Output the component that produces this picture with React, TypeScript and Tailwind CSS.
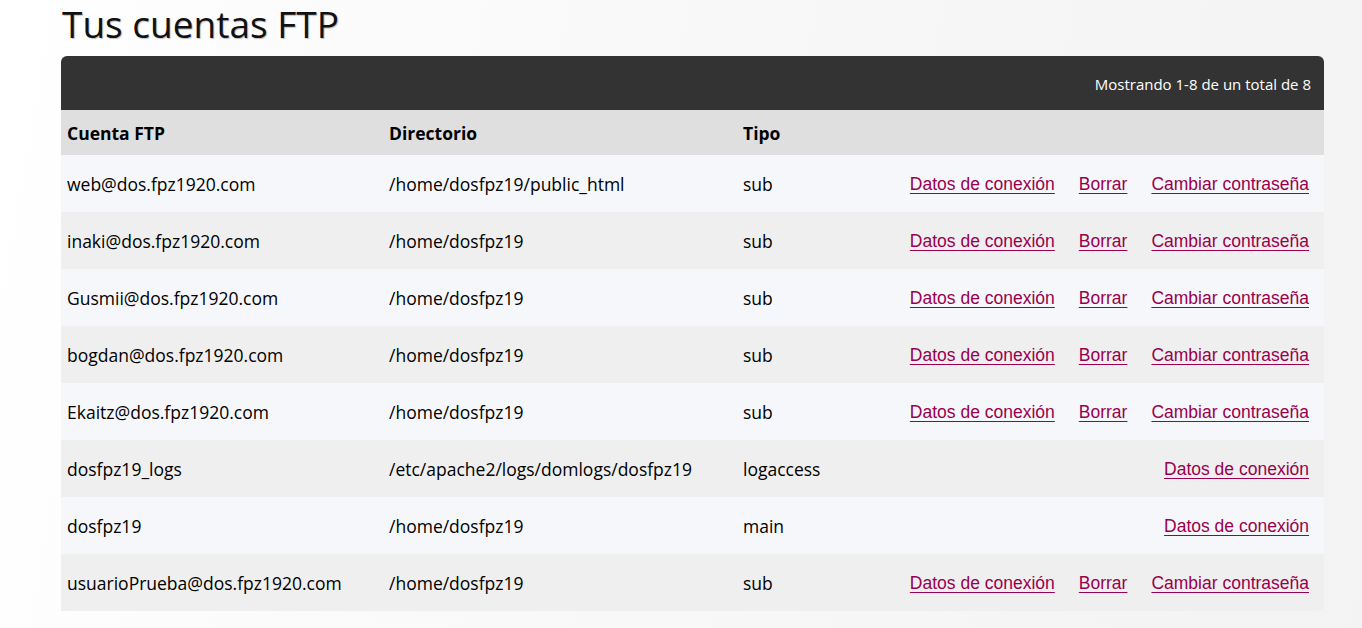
import React from "react";

type Row = { user: string; dir: string; type: string; full: boolean };

const rows: Row[] = [
  { user: "web@dos.fpz1920.com", dir: "/home/dosfpz19/public_html", type: "sub", full: true },
  { user: "inaki@dos.fpz1920.com", dir: "/home/dosfpz19", type: "sub", full: true },
  { user: "Gusmii@dos.fpz1920.com", dir: "/home/dosfpz19", type: "sub", full: true },
  { user: "bogdan@dos.fpz1920.com", dir: "/home/dosfpz19", type: "sub", full: true },
  { user: "Ekaitz@dos.fpz1920.com", dir: "/home/dosfpz19", type: "sub", full: true },
  { user: "dosfpz19_logs", dir: "/etc/apache2/logs/domlogs/dosfpz19", type: "logaccess", full: false },
  { user: "dosfpz19", dir: "/home/dosfpz19", type: "main", full: false },
  { user: "usuarioPrueba@dos.fpz1920.com", dir: "/home/dosfpz19", type: "sub", full: true },
];

const linkCls =
  "text-[#99004d] underline underline-offset-[3px] decoration-1 font-['Liberation_Sans',Arial,sans-serif] text-[17.5px] leading-[22px]";

export default function App() {
  return (
    <div className="min-h-[628px] w-full bg-[linear-gradient(100deg,#ffffff_0%,#f9f9f9_40%,#f3f3f3_100%)] font-['Open_Sans',sans-serif] text-black">
      <div className="pl-[61px] pr-[38px]">
        <h1 className="h-[56px] pl-[1px] pt-[1px] text-[37px] leading-[46px] text-[#111] [text-shadow:1px_1px_1px_rgba(0,0,0,0.25)]">
          Tus cuentas FTP
        </h1>
        <div className="w-[1263px]">
          <div className="h-[54px] rounded-t-[6px] bg-[#333333] flex items-center justify-end pr-[13px] pt-[3px] text-white text-[15px]">
            Mostrando 1-8 de un total de 8
          </div>
          <table className="w-full border-collapse">
            <thead>
              <tr className="h-[45px] bg-[#dfdfdf] text-left text-[17.5px] font-bold">
                <th className="w-[322px] pl-[6px] pt-[2px] font-bold">Cuenta FTP</th>
                <th className="w-[354px] pl-[6px] pt-[2px] font-bold">Directorio</th>
                <th className="pl-[6px] pt-[2px] font-bold">Tipo</th>
                <th></th>
              </tr>
            </thead>
            <tbody>
              {rows.map((r, i) => (
                <tr
                  key={i}
                  className={`h-[57px] text-[17.5px] ${i % 2 === 0 ? "bg-[#f6f7fb]" : "bg-[#efefef]"}`}
                >
                  <td className="pl-[6px] pt-[2px]">{r.user}</td>
                  <td className="pl-[6px] pt-[2px]">{r.dir}</td>
                  <td className="pl-[6px] pt-[2px]">{r.type}</td>
                  <td className="pr-[15px] pt-[1px]">
                    <div className="flex justify-end gap-[24px]">
                      <a href="#" className={linkCls}>Datos de conexión</a>
                      {r.full && (
                        <>
                          <a href="#" className={linkCls}>Borrar</a>
                          <a href="#" className={linkCls}>Cambiar contraseña</a>
                        </>
                      )}
                    </div>
                  </td>
                </tr>
              ))}
            </tbody>
          </table>
        </div>
      </div>
    </div>
  );
}
